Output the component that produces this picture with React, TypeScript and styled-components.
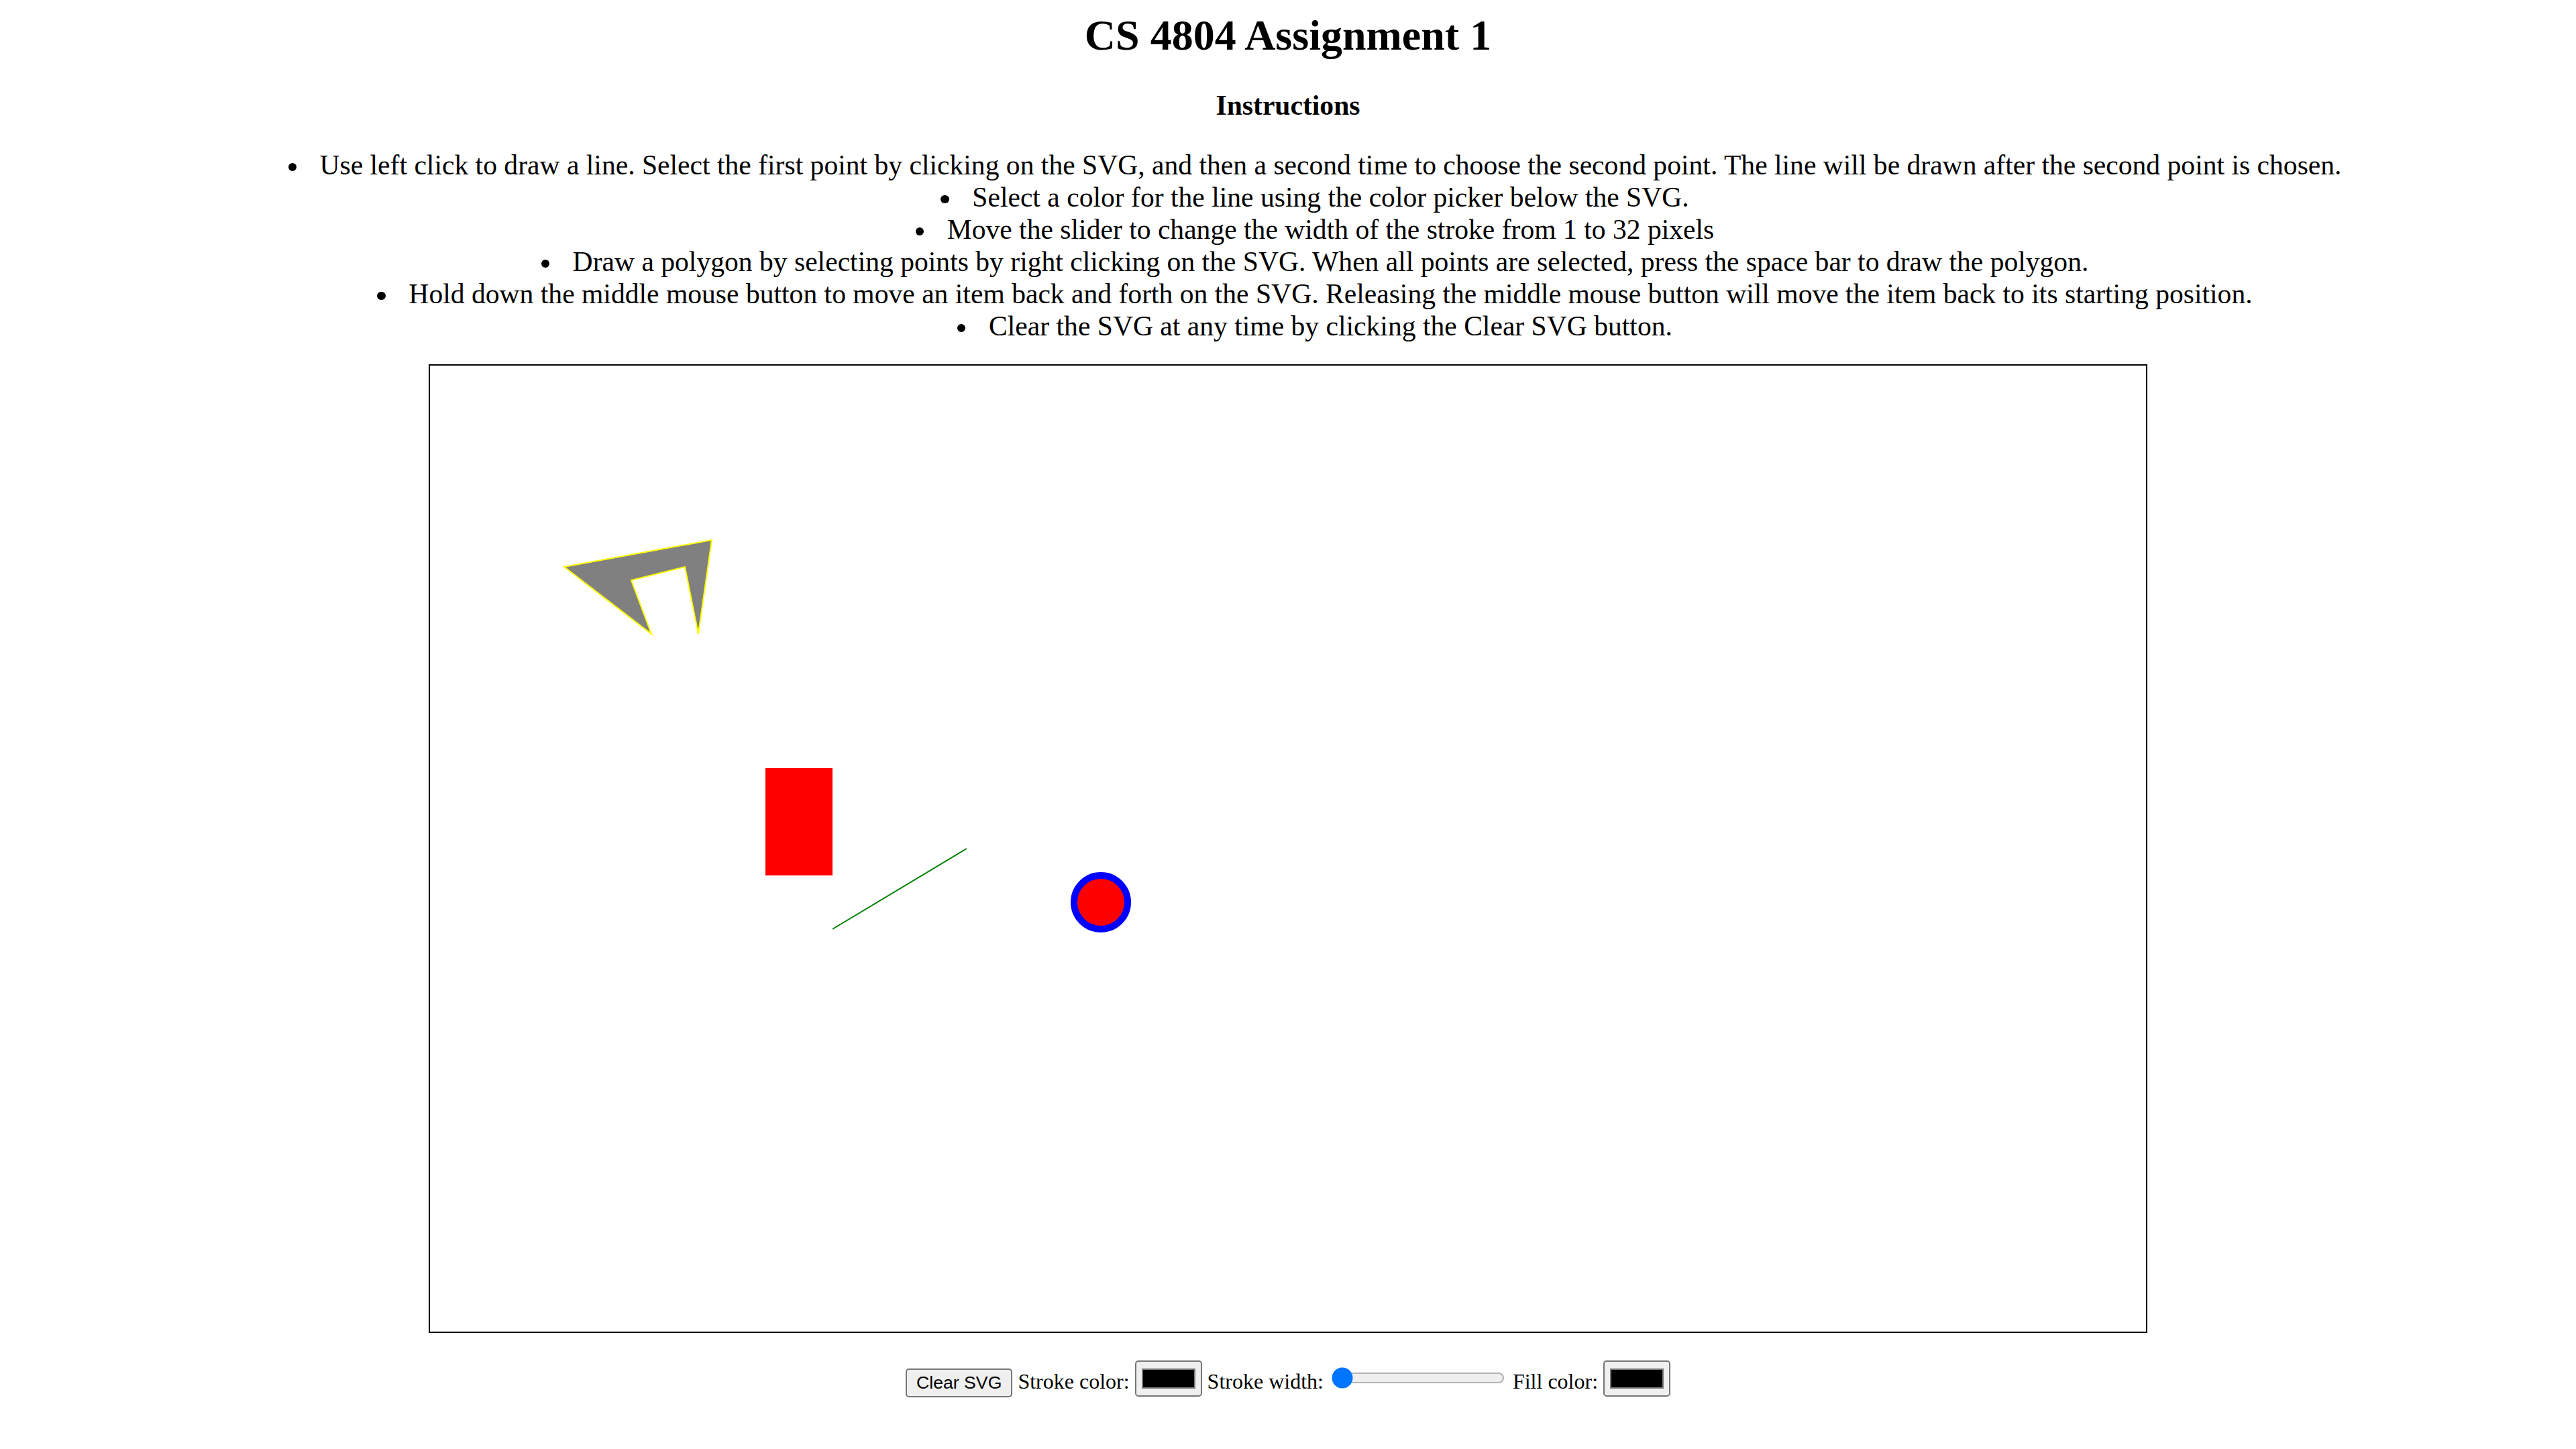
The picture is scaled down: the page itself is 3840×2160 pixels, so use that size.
import React from "react";
import styled, { createGlobalStyle } from "styled-components";

const GlobalStyle = createGlobalStyle`
  html, body {
    margin: 0;
    padding: 0;
    background: #ffffff;
  }
`;

const Page = styled.div`
  zoom: 2;
  padding: 8px;
  font-family: "Liberation Serif", "Times New Roman", serif;
  color: #000000;
`;

const Title = styled.h1`
  font-size: 32px;
  font-weight: bold;
  text-align: center;
  margin: 0 0 21.44px;
`;

const SectionHeading = styled.h3`
  font-size: 20.8px;
  font-weight: bold;
  text-align: center;
  margin: 0 0 20.8px;
`;

const InstructionList = styled.ul`
  font-size: 20.8px;
  list-style: none;
  text-align: center;
  margin: 0 0 16.5px;
  padding: 0 0 0 40px;
`;

const InstructionItem = styled.li`
  &::before {
    content: "";
    display: inline-block;
    width: 6.2px;
    height: 6.2px;
    border-radius: 50%;
    background: #000000;
    margin-right: 17.3px;
    vertical-align: 0.13em;
  }
`;

const Canvas = styled.svg`
  display: block;
  margin: 0 auto;
  width: 1279px;
  height: 720px;
  border: 1px solid #000000;
  background: #ffffff;
`;

const Toolbar = styled.div`
  margin-top: 20.5px;
  text-align: center;
  font-size: 16px;
`;

const ClearButton = styled.button`
  font-family: "Liberation Sans", Arial, sans-serif;
  font-size: 13.333px;
`;

const ColorInput = styled.input.attrs({ type: "color" })``;

const RangeInput = styled.input.attrs({ type: "range" })``;

const instructions = [
  "Use left click to draw a line. Select the first point by clicking on the SVG, and then a second time to choose the second point. The line will be drawn after the second point is chosen.",
  "Select a color for the line using the color picker below the SVG.",
  "Move the slider to change the width of the stroke from 1 to 32 pixels",
  "Draw a polygon by selecting points by right clicking on the SVG. When all points are selected, press the space bar to draw the polygon.",
  "Hold down the middle mouse button to move an item back and forth on the SVG. Releasing the middle mouse button will move the item back to its starting position.",
  "Clear the SVG at any time by clicking the Clear SVG button.",
];

export default function App() {
  return (
    <>
      <GlobalStyle />
      <Page>
        <Title>CS 4804 Assignment 1</Title>
        <SectionHeading>Instructions</SectionHeading>
        <InstructionList>
          {instructions.map((t) => (
            <InstructionItem key={t}>{t}</InstructionItem>
          ))}
        </InstructionList>
        <Canvas viewBox="0 0 1279 720">
          <polygon
            points="100,150 210,130 200,200 190,150 150,160 165,200"
            fill="gray"
            stroke="yellow"
            strokeWidth={1}
          />
          <rect x={250} y={300} width={50} height={80} fill="red" />
          <line x1={300} y1={420} x2={400} y2={360} stroke="green" strokeWidth={1} />
          <circle cx={500} cy={400} r={20} fill="red" stroke="blue" strokeWidth={5} />
        </Canvas>
        <Toolbar>
          <ClearButton type="button">Clear SVG</ClearButton> Stroke color:{" "}
          <ColorInput defaultValue="#000000" /> Stroke width:{" "}
          <RangeInput min={1} max={32} defaultValue={1} /> Fill color:{" "}
          <ColorInput defaultValue="#000000" />
        </Toolbar>
      </Page>
    </>
  );
}
